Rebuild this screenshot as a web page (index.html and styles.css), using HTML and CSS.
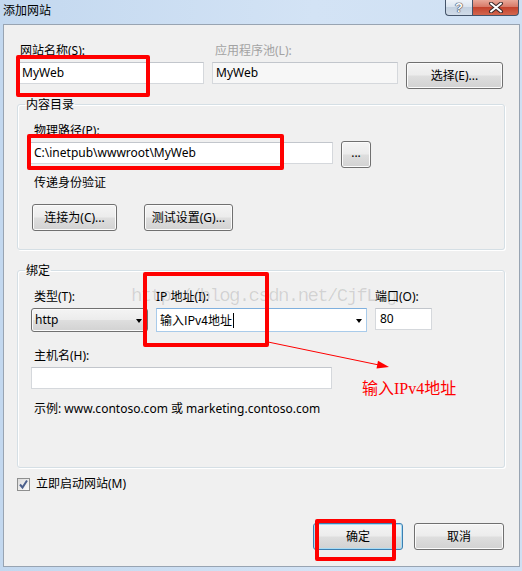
FILE: index.html
```html
<!DOCTYPE html>
<html lang="zh-CN">
<head>
<meta charset="utf-8">
<title>添加网站</title>
<link rel="stylesheet" href="styles.css">
</head>
<body>
<div class="window">
  <div class="titlebar">
    <span class="title">添加网站</span>
    <div class="caption-btns">
      <div class="cap cap-help">?</div>
      <div class="cap cap-close">
        <svg width="16" height="11" viewBox="0 0 16 11"><path d="M3 1.5 L13 9.5 M13 1.5 L3 9.5" stroke="#3a2a2a" stroke-width="4" stroke-linecap="round"/><path d="M3 1.5 L13 9.5 M13 1.5 L3 9.5" stroke="#ffffff" stroke-width="2" stroke-linecap="round"/></svg>
      </div>
    </div>
  </div>

  <div class="panel">
    <div class="row-site">
      <div class="lbl lbl-site">网站名称(S):</div>
      <div class="lbl lbl-pool">应用程序池(L):</div>
      <div></div>
      <div class="tb">MyWeb</div>
      <div class="tb tb-readonly">MyWeb</div>
      <div class="btn btn-select">选择(E)...</div>
    </div>

    <fieldset class="group group-content">
      <legend>内容目录</legend>
      <div class="lbl ind-16">物理路径(P):</div>
      <div class="path-row">
        <div class="tb tb-path">C:\inetpub\wwwroot\MyWeb</div>
        <div class="btn btn-browse">...</div>
      </div>
      <div class="lbl ind-16 pass">传递身份验证</div>
      <div class="btn-row">
        <div class="btn btn-connect">连接为(C)...</div>
        <div class="btn btn-test">测试设置(G)...</div>
      </div>
    </fieldset>

    <fieldset class="group group-binding">
      <legend>绑定</legend>
      <div class="bind-grid">
        <div class="lbl lbl-type">类型(T):</div>
        <div class="lbl">IP 地址(I):</div>
        <div class="lbl">端口(O):</div>
        <div class="combo">http<span class="arrow"></span></div>
        <div class="tb tb-ip">输入IPv4地址<span class="caret"></span><span class="arrow"></span></div>
        <div class="tb tb-port">80</div>
      </div>
      <div class="lbl ind-16 host-lbl">主机名(H):</div>
      <div class="tb tb-host"></div>
      <div class="lbl ind-16 example">示例: www.contoso.com 或 marketing.contoso.com</div>
    </fieldset>

    <div class="check-row">
      <span class="checkbox"><svg width="11" height="11" viewBox="0 0 11 11"><path d="M2 5.5 L4.5 8.5 L9 1.5" fill="none" stroke="#4b5f8c" stroke-width="2"/></svg></span>
      <span class="lbl">立即启动网站(M)</span>
    </div>

    <div class="footer">
      <div class="btn btn-ok">确定</div>
      <div class="btn btn-cancel">取消</div>
    </div>
  </div>

  <div class="watermark">http://blog.csdn.net/CjfLog</div>
  <div class="mark mark-1"></div>
  <div class="mark mark-2"></div>
  <div class="mark mark-3"></div>
  <div class="mark mark-4"></div>
  <svg class="arrow-note" width="522" height="571" viewBox="0 0 522 571">
    <line x1="268" y1="342" x2="379" y2="365" stroke="#ff0000" stroke-width="1"/>
    <polygon points="389,367 378,360.7 376.5,368.5" fill="#ff0000"/>
  </svg>
  <div class="note">输入IPv4地址</div>
</div>
</body>
</html>
```

FILE: styles.css
```css
html, body {
  margin: 0;
  padding: 0;
}
body {
  width: 522px;
  height: 571px;
  overflow: hidden;
  background: #c9dcf1;
}
.window {
  position: relative;
  width: 522px;
  height: 571px;
  display: flex;
  flex-direction: column;
  font-family: "Noto Sans", "Noto Sans CJK SC", sans-serif;
  font-size: 12px;
  line-height: 16px;
  color: #000;
  background: linear-gradient(to right, #c3d8ef, #d3e3f5 60%, #cfe0f3);
}

/* title bar */
.titlebar {
  height: 24px;
  display: flex;
  justify-content: space-between;
  align-items: flex-start;
  flex: none;
}
.title {
  padding: 2px 0 0 3px;
  font-family: "Noto Sans CJK SC", sans-serif;
}
.caption-btns {
  display: flex;
  margin-right: 3px;
}
.cap {
  box-sizing: border-box;
  height: 16px;
  border: 1px solid #44546a;
  border-top: none;
  display: flex;
  align-items: center;
  justify-content: center;
}
.cap-help {
  width: 27px;
  border-radius: 0 0 0 4px;
  border-right: none;
  background: linear-gradient(#eef3f9, #d9e3ee 50%, #c4d1e0 50%, #d0dbe8);
  color: #fff;
  font-weight: bold;
  font-size: 13px;
  font-family: "Liberation Sans", sans-serif;
  text-shadow: 0 0 1px #334, 0 0 1px #334, 0 0 1px #334;
}
.cap-close {
  width: 47px;
  border-radius: 0 0 4px 0;
  background: linear-gradient(#e9a899, #d67563 50%, #c4432d 50%, #d3664e);
}

/* panel */
.panel {
  box-sizing: border-box;
  margin: 0 2px 4px 3px;
  height: 544px;
  border: 1px solid #98a4b2;
  background: #f0f0f0;
  padding: 18px 14px 0 13px;
  display: flex;
  flex-direction: column;
}

.lbl {
  line-height: 16px;
  white-space: nowrap;
}

.row-site {
  display: grid;
  grid-template-columns: 186px 186px 97px;
  column-gap: 8px;
  row-gap: 3px;
  align-items: start;
  padding-left: 1px;
}
.lbl-site { padding-left: 2px; }
.lbl-pool { padding-left: 3px; color: #a3a3a3; }

.tb {
  box-sizing: border-box;
  height: 22px;
  border: 1px solid #d5d8dc;
  border-top-color: #c2c6cc;
  background: #fff;
  padding: 0 3px;
  line-height: 20px;
  white-space: nowrap;
  overflow: hidden;
}
.tb-readonly {
  background: #f7f7f7;
}

.btn {
  box-sizing: border-box;
  height: 27px;
  border: 1px solid #707070;
  border-radius: 3px;
  background: linear-gradient(#f4f4f4, #ececec 48%, #dedede 52%, #d2d2d2);
  box-shadow: inset 0 0 0 1px #fbfbfb;
  display: flex;
  align-items: center;
  justify-content: center;
  white-space: nowrap;
}

/* group boxes */
.group {
  margin: 0;
  padding: 11px 0 18px 0;
  border: 1px solid #d5dfe5;
  border-radius: 3px;
  box-shadow: inset 1px 1px 0 #fff, 1px 1px 0 #fff;
  min-inline-size: 0;
}
.group legend {
  padding: 0 1px;
  margin-left: 7px;
  line-height: 16px;
  font-family: "Noto Sans CJK SC", sans-serif;
}
.group-content {
  margin-top: 7px;
}
.group-binding {
  margin-top: 12px;
  padding-bottom: 50px;
}
.ind-16 { margin-left: 16px; }

.path-row {
  display: flex;
  align-items: flex-start;
  margin: 2px 0 0 10px;
}
.tb-path {
  width: 305px;
  margin-top: 1px;
  padding-left: 5px;
}
.btn-browse {
  width: 30px;
  margin-left: 8px;
  padding-bottom: 4px;
}
.pass { margin-top: 7px; }
.btn-row {
  display: flex;
  gap: 27px;
  margin: 13px 0 0 14px;
}
.btn-connect { width: 85px; }
.btn-test { width: 89px; }

.bind-grid {
  display: grid;
  grid-template-columns: 117px 211px 57px;
  column-gap: 8px;
  row-gap: 3px;
  align-items: start;
  margin-left: 13px;
}
.lbl-type { padding-left: 3px; }
.combo {
  position: relative;
  box-sizing: border-box;
  height: 24px;
  border: 1px solid #707070;
  border-radius: 3px;
  background: linear-gradient(#f4f4f4, #ececec 48%, #dedede 52%, #d2d2d2);
  box-shadow: inset 0 0 0 1px #fbfbfb;
  padding-left: 3px;
  line-height: 22px;
}
.arrow {
  position: absolute;
  right: 5px;
  top: 10px;
  width: 0;
  height: 0;
  border-left: 3.5px solid transparent;
  border-right: 3.5px solid transparent;
  border-top: 4px solid #000;
}
.combo .arrow { right: 5px; }
.tb-ip {
  position: relative;
  height: 24px;
  line-height: 22px;
  border-color: #a9cbea;
  border-top-color: #7fb0de;
  font-family: "Noto Sans CJK SC", sans-serif;
}
.caret {
  display: inline-block;
  width: 1px;
  height: 15px;
  background: #000;
  vertical-align: -3px;
  margin-left: 1px;
}
.tb-ip .arrow { right: 4px; }
.tb-port {
  padding-left: 4px;
}
.host-lbl { margin-top: 16px; }
.tb-host {
  width: 301px;
  margin: 3px 0 0 13px;
}
.example { margin-top: 12px; }

/* checkbox row */
.check-row {
  display: flex;
  align-items: center;
  gap: 6px;
  margin-top: 8px;
}
.checkbox {
  box-sizing: border-box;
  width: 13px;
  height: 13px;
  border: 1px solid #8e8f8f;
  background: linear-gradient(135deg, #dcdcdc, #fbfbfb);
  display: flex;
  align-items: center;
  justify-content: center;
}

.footer {
  display: flex;
  justify-content: flex-end;
  gap: 11px;
  margin-top: 31px;
  padding-right: 1px;
}
.btn-ok, .btn-cancel { width: 90px; }
.btn-ok {
  border-color: #3c7fb1;
  box-shadow: inset 0 0 0 1px #a8dcf5;
}

/* annotations */
.watermark {
  position: absolute;
  left: 131px;
  top: 284px;
  font-family: "Liberation Mono", monospace;
  font-size: 19px;
  letter-spacing: -1.6px;
  line-height: 24px;
  color: rgba(0, 0, 0, 0.13);
  white-space: nowrap;
  pointer-events: none;
}
.mark {
  position: absolute;
  box-sizing: border-box;
  border: 4px solid #ff0000;
  border-radius: 2px;
}
.mark-1 { left: 16px; top: 55px; width: 134px; height: 42px; }
.mark-2 { left: 27px; top: 134px; width: 257px; height: 36px; }
.mark-3 { left: 143px; top: 272px; width: 126px; height: 75px; }
.mark-4 { left: 315px; top: 519px; width: 81px; height: 42px; }
.arrow-note {
  position: absolute;
  left: 0;
  top: 0;
  pointer-events: none;
}
.note {
  position: absolute;
  left: 362px;
  top: 379px;
  font-family: "Liberation Serif", "Noto Sans CJK SC", serif;
  font-size: 16px;
  line-height: 20px;
  color: #ff0000;
  white-space: nowrap;
}
```
